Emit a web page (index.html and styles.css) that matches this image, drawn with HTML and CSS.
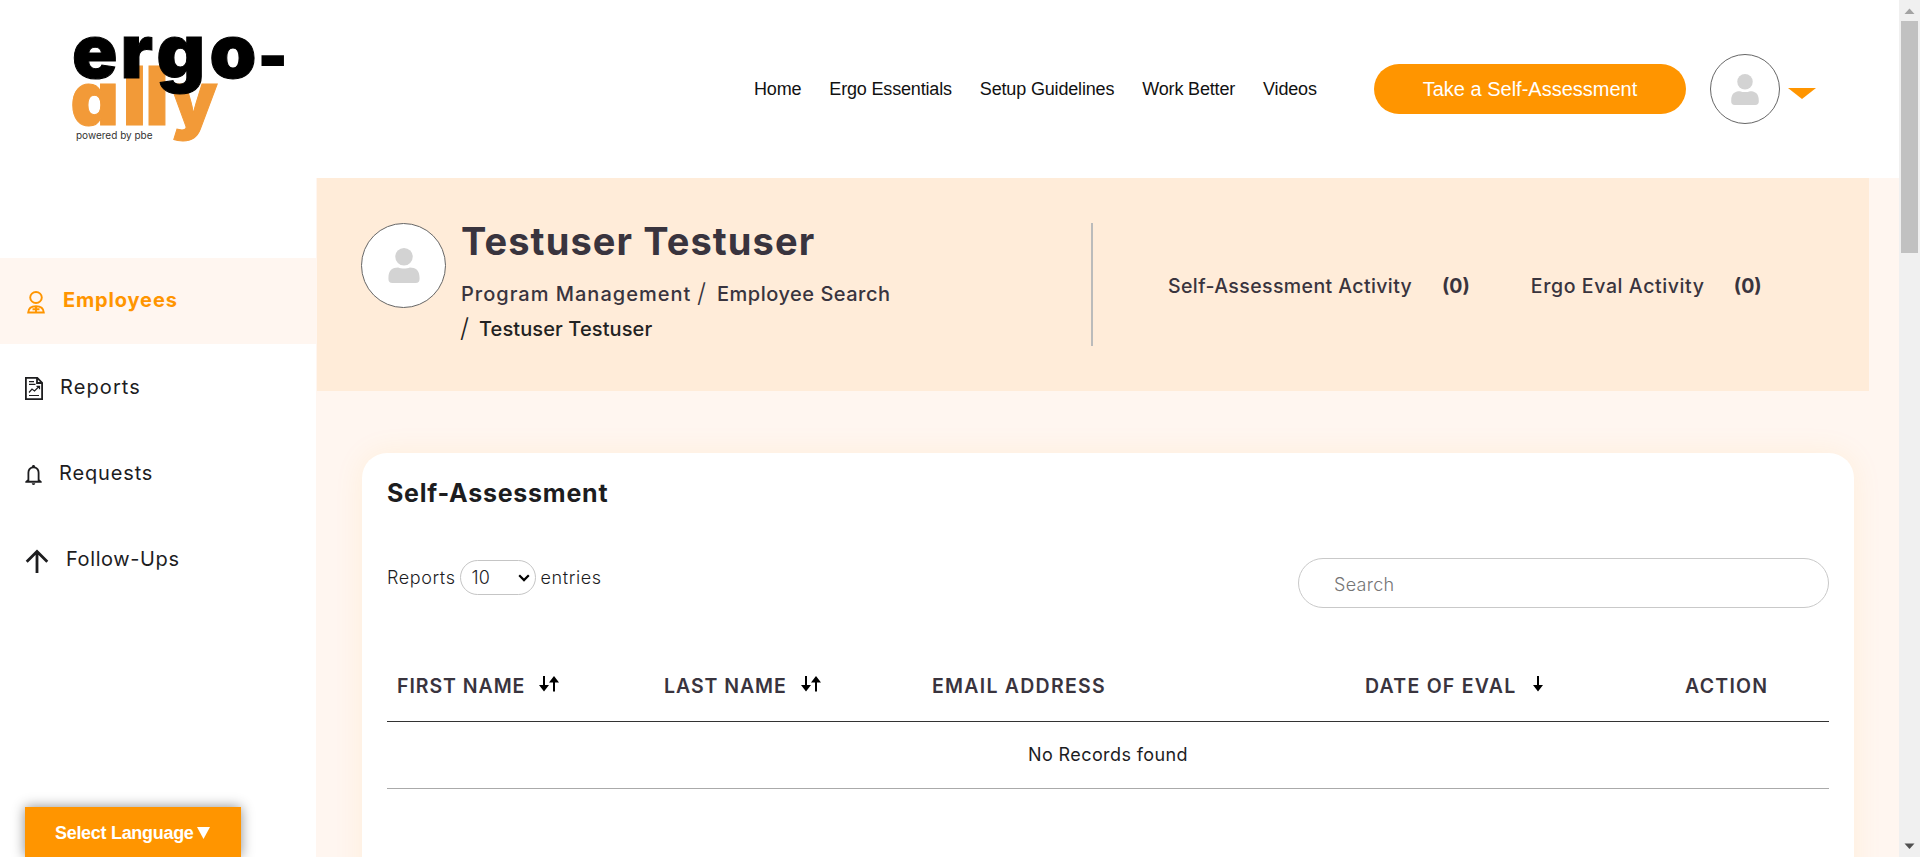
FILE: index.html
```html
<!DOCTYPE html>
<html lang="en">
<head>
<meta charset="utf-8">
<title>Ergo-ally</title>
<link rel="stylesheet" href="styles.css">
</head>
<body>
<div class="window">
  <div class="page">
    <header class="header">
      <svg class="logo" width="240" height="130" viewBox="60 20 240 130" role="img" aria-label="ergo-ally powered by pbe">
        <text class="logo-ally" y="124.500" x="70.500 122.500 145 170">a<tspan class="logo-l">ll</tspan>y</text>
        <text class="logo-ergo" y="77.500" x="72 120.500 156.500 209.500">ergo</text>
        <text class="logo-ergo logo-dash" x="258.500" y="78">-</text>
        <text class="logo-tag" x="76" y="139">powered by pbe</text>
      </svg>
      <nav class="nav">
        <a>Home</a><a>Ergo Essentials</a><a>Setup Guidelines</a><a>Work Better</a><a>Videos</a>
      </nav>
      <a class="cta">Take a Self-Assessment</a>
      <div class="avatar avatar-small">
        <svg width="28" height="31" viewBox="0 0 32 36"><circle cx="16" cy="9" r="9"/><path d="M0 30.500C0 23 4 20 10 20c3 1.300 9 1.300 12 0 6 0 10 3 10 10.500V32q0 4-4 4H4q-4 0-4-4z"/></svg>
      </div>
      <svg class="caret" width="28" height="11" viewBox="0 0 28 11"><path d="M0 0h28L14 11z"/></svg>
    </header>
    <div class="body">
      <aside class="sidebar">
        <a class="item active">
          <svg width="18" height="23" viewBox="0 0 18 23" fill="none" stroke="#ff9500" stroke-width="1.900"><ellipse cx="9" cy="6.500" rx="5.800" ry="5.500"/><path d="M1.200 21.500C1.500 17.500 4.500 15.200 9 15.200s7.500 2.300 7.800 6.300zM9 15v6.500M5.500 18.300h7"/></svg>
          <span class="t-emp">Employees</span>
        </a>
        <a class="item">
          <svg width="18" height="23" viewBox="0 0 18 23" fill="none" stroke="#1d1d1f" stroke-width="1.800"><path d="M.9.900h11.400l4.800 5v16.200H.9zM12 1v5h5"/><path stroke-width="1.200" d="M4 4.700h5M4 7.300h6.500M4 18.500h10M4 15.500l3-3.500 2.500 2 4.500-4.500M11.500 9.300h3v3"/></svg>
          <span class="t-rep">Reports</span>
        </a>
        <a class="item">
          <svg width="17" height="20" viewBox="0 0 17 20" fill="#1d1d1f"><path d="M8.500 0c1 0 1.500.7 1.500 1.600 3 .8 4.500 3.200 4.500 6.200v6.700l2.200 2V17.700H.3V16.500l2.200-2V7.800c0-3 1.500-5.400 4.500-6.200C7 .7 7.500 0 8.500 0zm0 3.200c-2.600 0-4.200 2-4.200 4.600v8h8.400v-8c0-2.600-1.600-4.600-4.200-4.600zM6.800 18.300h3.400c0 1-.7 1.700-1.700 1.700s-1.700-.7-1.700-1.700z"/></svg>
          <span class="t-req">Requests</span>
        </a>
        <a class="item">
          <svg width="24" height="24" viewBox="0 0 24 24" fill="none" stroke="#1d1d1f" stroke-width="2.800"><path d="M12 24V3M1.700 12.800L12 2.500l10.300 10.300"/></svg>
          <span class="t-fol">Follow-Ups</span>
        </a>
      </aside>
      <main class="main">
        <section class="banner">
          <div class="avatar avatar-large">
            <svg width="32" height="35" viewBox="0 0 32 36"><circle cx="16" cy="9" r="9"/><path d="M0 30.500C0 23 4 20 10 20c3 1.300 9 1.300 12 0 6 0 10 3 10 10.500V32q0 4-4 4H4q-4 0-4-4z"/></svg>
          </div>
          <div class="who">
            <h1>Testuser Testuser</h1>
            <div class="crumbs">
              <span class="c-program">Program Management</span><i class="slash">/</i><span>Employee Search</span>
            </div>
            <div class="crumbs current">
              <i class="slash">/</i><span>Testuser Testuser</span>
            </div>
          </div>
          <div class="stats">
            <span class="s1">Self-Assessment Activity</span><b>(0)</b>
            <span class="s2">Ergo Eval Activity</span><b>(0)</b>
          </div>
        </section>
        <section class="card">
          <h2>Self-Assessment</h2>
          <div class="tools">
            <div class="length">
              <span>Reports</span>
              <div class="select"><span>10</span><svg width="12" height="8" viewBox="0 0 12 8"><path d="M1.200 1.300L6 6.100l4.800-4.800" fill="none" stroke="#000" stroke-width="2.200"/></svg></div>
              <span>entries</span>
            </div>
            <div class="search">Search</div>
          </div>
          <div class="thead">
            <div><span>FIRST NAME</span><svg width="20" height="16" viewBox="0 0 20 16"><path d="M4 0h2v9h4l-5 6.500L0 9h4zM14 15.500h2v-9h4L15 0l-5 6.500h4z"/></svg></div>
            <div><span>LAST NAME</span><svg width="20" height="16" viewBox="0 0 20 16"><path d="M4 0h2v9h4l-5 6.500L0 9h4zM14 15.500h2v-9h4L15 0l-5 6.500h4z"/></svg></div>
            <div><span>EMAIL ADDRESS</span></div>
            <div><span>DATE OF EVAL</span><svg width="10" height="16" viewBox="0 0 10 16"><path d="M4 0h2v9h4l-5 6.500L0 9h4z"/></svg></div>
            <div><span>ACTION</span></div>
          </div>
          <div class="empty">No Records found</div>
        </section>
      </main>
    </div>
  </div>
  <div class="scrollbar">
    <svg width="21" height="21" viewBox="0 0 21 21"><path d="M5.500 14h10l-5-5.500z" fill="#a3a3a3"/></svg>
    <div class="thumb"></div>
    <svg width="21" height="21" viewBox="0 0 21 21"><path d="M5.500 7.500h10l-5 5.500z" fill="#505050"/></svg>
  </div>
</div>
<div class="language"><span>Select Language</span><svg width="13" height="12" viewBox="0 0 13 12"><path d="M0 0h13L6.500 12z" fill="#fff"/></svg></div>
</body>
</html>
```

FILE: styles.css
```css
* { box-sizing: border-box; }
body {
  margin: 0;
  height: 857px;
  overflow: hidden;
  background: #fff;
  color: #1d1d1f;
  font-family: Inter, sans-serif;
}
h1, h2 { margin: 0; }
svg { display: block; flex: none; }
span, b, a { white-space: nowrap; }

.window { display: flex; height: 857px; }
.page { width: 1899px; height: 857px; overflow: hidden; }

/* header */
.header { display: flex; align-items: center; height: 178px; padding-left: 60px; }
.logo { margin-top: -8px; overflow: visible; }
.logo .logo-ergo, .logo .logo-ally { font: 900 75px Inter, sans-serif; font-feature-settings: "cv11"; stroke-width: 1; }
.logo-ergo { fill: #000; stroke: #000; }
.logo-ally { fill: #f29a38; stroke: #f29a38; }
.logo .logo-l { font-size: 81px; }
.logo .logo-dash { font-size: 60px; stroke-width: 2; }
.logo .logo-tag { font: 10px Inter, sans-serif; fill: #333; }
.nav {
  display: flex;
  gap: 28px;
  width: 620px;
  margin-left: 454px;
  font: 18px "Liberation Sans", sans-serif;
  letter-spacing: -0.17px;
  color: #111;
}
.cta {
  display: flex;
  align-items: center;
  justify-content: center;
  width: 312px;
  height: 50px;
  border-radius: 25px;
  background: #ff9500;
  color: #fff;
  font: 20px "Liberation Sans", sans-serif;
}
.avatar {
  display: flex;
  justify-content: center;
  flex: none;
  border: 1px solid #666;
  border-radius: 50%;
  background: #fff;
}
.avatar svg { fill: #d3d3d3; }
.avatar-small { width: 70px; height: 70px; margin-left: 24px; padding-top: 19px; }
.caret { margin: 9px 0 0 8px; fill: #ff9500; }

/* body */
.body { display: flex; height: 679px; }
.sidebar { width: 316px; padding-top: 80px; background: #fff; }
.item { display: flex; align-items: center; height: 86px; padding-left: 25px; font-size: 20px; letter-spacing: 0.85px; }
.item.active { padding-left: 27px; background: #fff6f0; color: #ff9500; font-weight: 700; }
.item svg { margin-top: 3px; }
.t-emp { margin: -2px 0 0 18px; }
.t-rep { margin-left: 17px; letter-spacing: 1.1px; }
.t-req { margin-left: 17px; }
.t-fol { margin-left: 17px; letter-spacing: 0.6px; }

.main { width: 1583px; padding-left: 1px; background: #fff6f0; }
.banner { display: flex; width: 1552px; height: 213px; padding: 45px 0 0 44px; background: #ffecd9; color: #39343e; }
.avatar-large { width: 85px; height: 85px; padding-top: 24px; }
.who { width: 645px; padding-left: 15px; }
.who h1 { height: 37px; font-size: 38px; line-height: 37px; font-weight: 700; letter-spacing: 1.1px; }
.crumbs { display: flex; height: 35px; line-height: 35px; font-size: 20px; font-weight: 500; letter-spacing: 0.5px; }
.crumbs span { margin-left: -1px; }
.who h1 + .crumbs { margin-top: 17px; }
.c-program { width: 232px; letter-spacing: 1px; }
.crumbs .c-program { margin-left: 0; }
.crumbs.current { color: #222; letter-spacing: 0.1px; }
.slash { width: 25px; padding-left: 4px; font: 300 26px/32px Inter, sans-serif; }
.crumbs.current .slash { width: 19px; margin-left: -1px; padding-left: 0; }
.crumbs.current span { margin-left: 0; }
.stats { display: flex; width: 700px; height: 123px; padding: 46px 0 0 75px; border-left: 2px solid #bbb; font-size: 19.500px; line-height: 35px; font-weight: 500; }
.stats .s1 { width: 274px; letter-spacing: 0.4px; }
.stats .s2 { width: 203px; margin-left: 61px; letter-spacing: 0.6px; }

.card {
  width: 1492px;
  height: 500px;
  margin: 62px 0 0 45px;
  padding: 24px 25px 0;
  border-radius: 25px;
  background: #fff;
  box-shadow: 0 0 30px rgba(255, 165, 0, 0.09);
}
.card h2 { height: 32px; font-size: 25px; line-height: 32px; letter-spacing: 0.75px; }
.tools { display: flex; justify-content: space-between; margin-top: 49px; font-size: 18px; font-weight: 300; }
.length { display: flex; align-items: center; height: 35px; margin-top: 2px; letter-spacing: 0.6px; }
.select { display: flex; align-items: center; justify-content: space-between; width: 76px; height: 35px; margin: 0 5px 0 4px; padding: 0 5px 0 11px; border: 1px solid #c5c5c5; border-radius: 18px; letter-spacing: 0; }
.search { width: 531px; height: 50px; padding-left: 35px; border: 1px solid #c9c9c9; border-radius: 25px; line-height: 52px; color: #757575; letter-spacing: 0.3px; }
.thead { display: grid; grid-template-columns: 267px 268px 433px 320px 154px; height: 114px; padding-top: 66px; border-bottom: 1px solid #333; color: #39343e; font-size: 19.500px; line-height: 24px; font-weight: 600; letter-spacing: 0.95px; }
.thead div { display: flex; padding-left: 10px; }
.thead div:nth-child(n+3) { letter-spacing: 1.25px; }
.thead svg { margin: 2px 0 0 14px; fill: #000; }
.thead div:nth-child(4) svg { margin-left: 16px; }
.empty { display: flex; justify-content: center; height: 67px; border-bottom: 1px solid #aaa; font-size: 18px; line-height: 66px; letter-spacing: 0.4px; }

.scrollbar { display: flex; flex-direction: column; width: 21px; background: #f0f0f0; }
.thumb { width: 17px; height: 232px; margin: 0 2px auto; background: #c1c1c1; }

/* floats over the page's lower left corner */
.language {
  position: absolute;
  left: 25px;
  top: 807px;
  display: flex;
  align-items: center;
  gap: 3px;
  width: 216px;
  height: 50px;
  padding: 2px 0 0 30px;
  background: #ff9500;
  color: #fff;
  font: bold 18px "Liberation Sans", sans-serif;
  letter-spacing: -0.3px;
  box-shadow: 0 0 12px rgba(0, 0, 0, 0.45);
}
```
